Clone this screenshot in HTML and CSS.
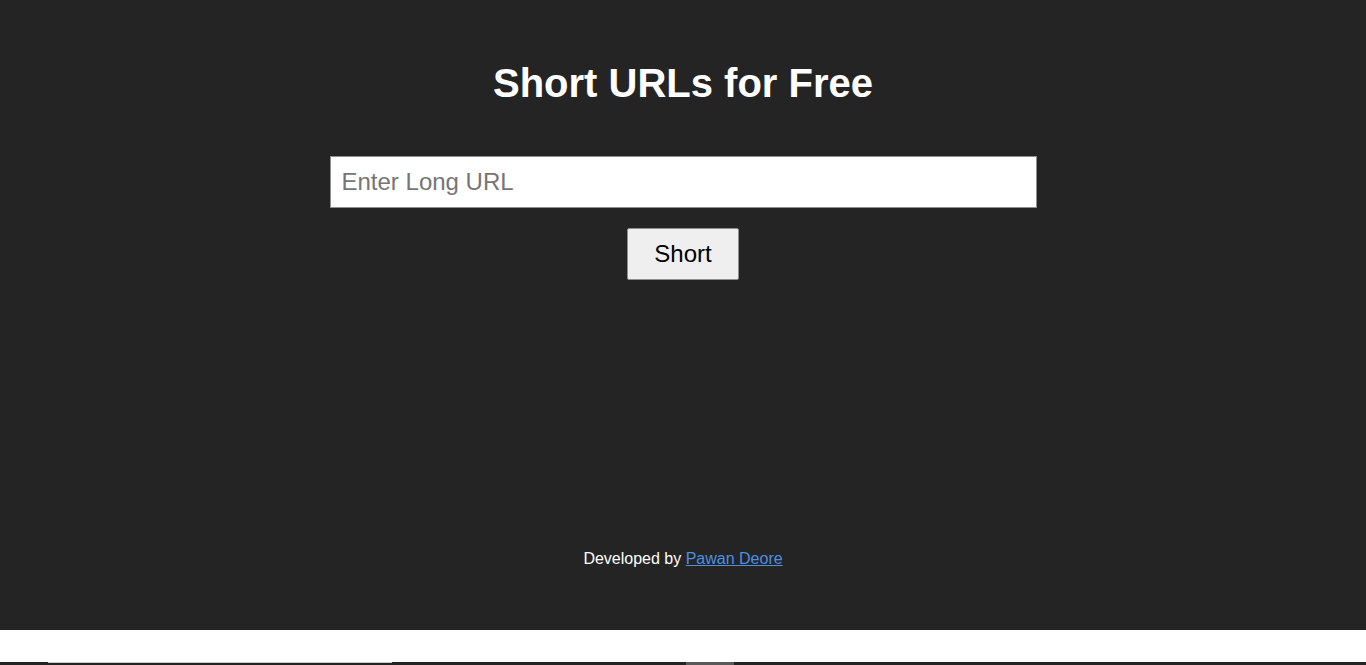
FILE: index.html
```html
<!DOCTYPE html>
<html>
<head>
<meta charset="utf-8">
<title>Short URLs for Free</title>
<link rel="stylesheet" href="styles.css">
</head>
<body>
<main class="app">
  <h1 class="title">Short URLs for Free</h1>
  <form class="form">
    <input class="url-input" type="text" placeholder="Enter Long URL">
    <button class="short-btn" type="button">Short</button>
  </form>
  <footer class="footer">Developed by <a href="#" class="author">Pawan Deore</a></footer>
</main>
<div class="blank"></div>
<div class="edge">
  <span class="edge-a"></span>
  <span class="edge-b"></span>
</div>
</body>
</html>
```
FILE: styles.css
```css
html, body {
  margin: 0;
  padding: 0;
  background: #ffffff;
  font-family: "Liberation Sans", Arial, sans-serif;
}
.app {
  height: 630px;
  background: #242424;
  color: #ffffff;
  display: flex;
  flex-direction: column;
  align-items: center;
  box-sizing: border-box;
  padding-top: 60px;
}
.title {
  margin: 0;
  font-size: 40px;
  font-weight: bold;
  line-height: 46px;
}
.form {
  margin-top: 50px;
  display: flex;
  flex-direction: column;
  align-items: center;
  gap: 20px;
}
.url-input {
  width: 707px;
  height: 52px;
  box-sizing: border-box;
  border: 1px solid #8f8f8f;
  background: #ffffff;
  padding: 0 11px;
  font-family: "Liberation Sans", Arial, sans-serif;
  font-size: 24px;
  color: #000;
  outline: none;
}
.url-input::placeholder {
  color: #757575;
}
.short-btn {
  width: 112px;
  height: 52px;
  box-sizing: border-box;
  border: 1px solid #8f8f8f;
  background: #efefef;
  font-family: "Liberation Sans", Arial, sans-serif;
  font-size: 24px;
  color: #000;
  padding: 0;
  border-radius: 2px;
}
.footer {
  margin-top: auto;
  margin-bottom: 62px;
  font-size: 16px;
  line-height: 18px;
}
.author {
  color: #4d8fe0;
}
.blank {
  height: 32px;
  background: #fff;
}
.edge {
  height: 3px;
  background: #242424;
  position: relative;
}
.edge-a {
  position: absolute;
  left: 48px;
  width: 344px;
  top: 0;
  height: 1px;
  background: #c8c8c8;
}
.edge-b {
  position: absolute;
  left: 686px;
  width: 48px;
  top: 0;
  height: 3px;
  background: #5a5a5a;
}
```
